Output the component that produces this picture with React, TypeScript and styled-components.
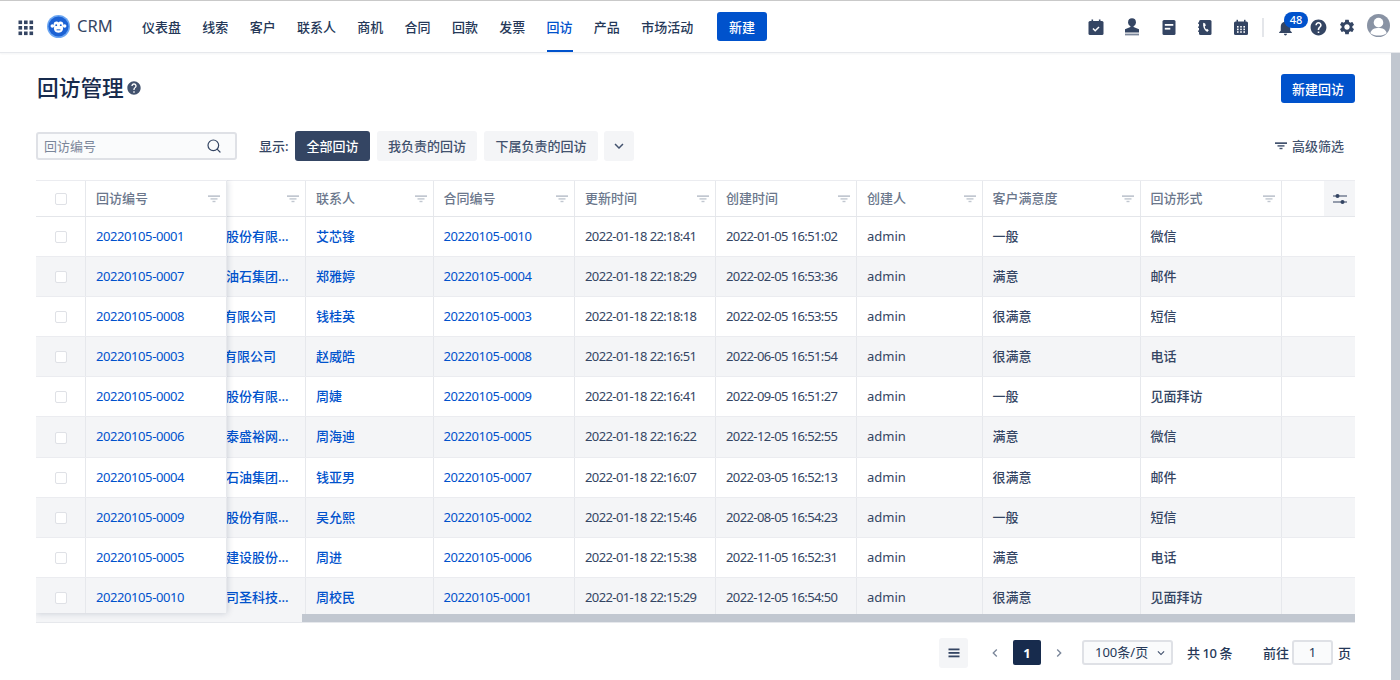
import React from "react";
import styled, { createGlobalStyle } from "styled-components";
import { MdNotifications, MdHelp, MdSettings, MdKeyboardArrowDown, MdKeyboardArrowLeft, MdKeyboardArrowRight } from "react-icons/md";
import { Search as SearchGlyph } from "lucide-react";

const Global = createGlobalStyle`
  html, body { margin: 0; padding: 0; width: 1400px; height: 680px; overflow: hidden; background: #fff; }
  body { font-family: "Noto Sans", "Noto Sans CJK SC", sans-serif; font-size: 13px; color: #172b4d; }
  * { box-sizing: border-box; }
`;

const Page = styled.div`position: relative; width: 1400px; height: 680px; overflow: hidden; background: #fff;`;
const TopStrip = styled.div`height: 1px; background: #c9c9c9;`;
const Nav = styled.header`
  position: relative; height: 52px; background: #fff; border-bottom: 1px solid #e6e8ec;
  box-shadow: 0 1px 2px rgba(9,30,66,.05);
`;
const GridIcon = styled.svg`position: absolute; left: 18px; top: 19px; width: 16px; height: 16px;`;
const Logo = styled.svg`position: absolute; left: 47px; top: 14px; width: 23px; height: 23px;`;
const Brand = styled.div`position: absolute; left: 77px; top: 14px; font-size: 16.5px; line-height: 22px; color: #344563;`;
const Menu = styled.nav`position: absolute; left: 142px; top: 0; height: 51px; display: flex; gap: 21.3px;`;
const MenuItem = styled.a<{ $active?: boolean }>`
  display: block; height: 51px; line-height: 53px; font-size: 13px; font-weight: 500;
  color: ${p => (p.$active ? "#0052cc" : "#253858")};
  border-bottom: 2px solid ${p => (p.$active ? "#0052cc" : "transparent")};
`;
const PrimaryButton = styled.button<{ $left: number; $top: number; $width: number }>`
  position: absolute; left: ${p => p.$left}px; top: ${p => p.$top}px; width: ${p => p.$width}px; height: 29px;
  padding: 0; border: 0; border-radius: 3px; background: #0052cc; color: #fff;
  font: 500 13px "Noto Sans", "Noto Sans CJK SC", sans-serif;
`;
const NavIcon = styled.span<{ $x: number }>`
  position: absolute; left: ${p => p.$x - 10}px; top: 16px; width: 20px; height: 20px; color: #344563;
  display: flex; align-items: center; justify-content: center;
`;
const Divider = styled.div`position: absolute; left: 1262px; top: 17px; width: 2px; height: 19px; background: #e4e6ea;`;
const Badge = styled.div`
  position: absolute; left: 1284px; top: 11px; width: 24px; height: 16px; border-radius: 8px; background: #0052cc; color: #fff;
  font-size: 11px; font-weight: 500; line-height: 16px; text-align: center;
`;
const Avatar = styled.svg`position: absolute; left: 1367px; top: 13px; width: 23px; height: 23px;`;

const PageScroll = styled.div`position: absolute; left: 1391px; top: 53px; width: 9px; height: 627px; background: #c1c7d0;`;
const Title = styled.h1`position: absolute; left: 37px; top: 72px; margin: 0; font-size: 21.7px; line-height: 32px; font-weight: 500; color: #172b4d;`;
const TitleHelp = styled.span`position: absolute; left: 126px; top: 80px; color: #42526e; display: flex;`;

const Search = styled.div`
  position: absolute; left: 36px; top: 132px; width: 201px; height: 28px; background: #fafbfc;
  border: 2px solid #dfe1e6; border-radius: 3px; padding-left: 6px; line-height: 24px; color: #7a869a; font-size: 13px;
`;
const SearchIcon = styled.span`position: absolute; right: 13px; top: 4px; color: #344563; display: flex;`;
const ShowLabel = styled.div`position: absolute; left: 259px; top: 136px; line-height: 20px; color: #344563; font-size: 13px; font-weight: 500;`;
const Tab = styled.div<{ $left: number; $width: number; $active?: boolean }>`
  position: absolute; left: ${p => p.$left}px; top: 131px; width: ${p => p.$width}px; height: 30px; border-radius: 3px; padding-bottom: 1px;
  background: ${p => (p.$active ? "#344563" : "#f4f5f7")}; color: ${p => (p.$active ? "#fff" : "#42526e")};
  font-size: 13px; font-weight: 500; display: flex; align-items: center; justify-content: center;
`;
const AdvFilter = styled.div`position: absolute; left: 1292px; top: 136px; line-height: 20px; font-size: 13px; font-weight: 500; color: #42526e;`;
const AdvIcon = styled.svg`position: absolute; left: 1275px; top: 142px; width: 12px; height: 8px;`;

const Table = styled.div`
  position: absolute; left: 36px; top: 180px; width: 1319px; height: 443px; overflow: hidden;
  background: #f4f5f7; border-bottom: 1px solid #e6e8ec;
`;
const Rows = styled.div`position: absolute; left: 0; top: 0; width: 1319px; height: 434px; overflow: hidden; background: #fff;`;
const HeaderRow = styled.div`
  display: flex; height: 37px; background: #fff; border-top: 1px solid #ebecf0; border-bottom: 1px solid #e4e6ea;
`;
const Row = styled.div<{ $alt: boolean }>`
  display: flex; height: 40.1px; background: ${p => (p.$alt ? "#f4f5f7" : "#fff")}; border-bottom: 1px solid #ebecf0;
`;
const Cell = styled.div<{ $w: number; $link?: boolean }>`
  flex: none; width: ${p => p.$w}px; padding: 0 10px; border-right: 1px solid #e6e8ec;
  white-space: nowrap; overflow: hidden;
  line-height: 39px; font-size: 13px; font-weight: 500; color: ${p => (p.$link ? "#0052cc" : "#344563")};
`;
const IdCell = styled(Cell)`font-weight: 400; letter-spacing: -0.42px;`;
const TimeCell = styled(Cell)`font-weight: 400; letter-spacing: -0.6px;`;
const AdminCell = styled(Cell)`font-weight: 400;`;
const NameCell = styled(Cell)<{ $shift: number }>`
  padding: 0; text-indent: ${p => -p.$shift}px;
`;
const HeadCell = styled.div<{ $w: number }>`
  position: relative; flex: none; width: ${p => p.$w}px; padding-left: 10px; border-right: 1px solid #e6e8ec;
  line-height: 35px; font-size: 13px; color: #6b778c; font-weight: 500; white-space: nowrap; overflow: hidden;
`;
const HeadFilter = styled.svg`position: absolute; right: 6px; top: 14px; width: 12px; height: 8px;`;
const Spacer = styled.div`flex: 0 0 191px;`;
const Rest = styled.div`flex: 1;`;
const SettingCell = styled.div`
  position: absolute; right: 0; top: 1px; width: 31px; height: 35px; background: #f4f5f7;
  display: flex; align-items: center; justify-content: center;
`;
const Fixed = styled.div`
  position: absolute; left: 0; top: 0; width: 191px; height: 433px; overflow: hidden; background: #fff;
  box-shadow: 0 0 7px rgba(9,30,66,.2);
`;
const CheckCell = styled.div`
  flex: none; width: 50px; border-right: 1px solid #e6e8ec;
  display: flex; align-items: center; justify-content: center; padding-top: 1px;
`;
const Check = styled.span`display: block; width: 12px; height: 12px; background: #fff; border: 1px solid #dfe1e6; border-radius: 2px;`;
const Thumb = styled.div`position: absolute; left: 266px; top: 434px; width: 1053px; height: 8px; background: #c1c7d0;`;

const Pager = styled.div`position: absolute; left: 0; top: 0;`;
const ListBtn = styled.div`
  position: absolute; left: 939px; top: 638px; width: 29px; height: 30px; border-radius: 3px; background: #f4f5f7;
  display: flex; align-items: center; justify-content: center;
`;
const Arrow = styled.span<{ $x: number }>`position: absolute; left: ${p => p.$x - 8}px; top: 645px; display: flex; color: #7a869a;`;
const PageNo = styled.div`
  position: absolute; left: 1013px; top: 640px; width: 28px; height: 25px; border-radius: 2px; background: #172b4d; color: #fff;
  font-weight: 700; line-height: 26px; text-align: center; font-size: 13px;
`;
const SizeSelect = styled.div`
  position: absolute; left: 1082px; top: 640px; width: 91px; height: 25px; background: #fafbfc; border: 2px solid #dfe1e6; border-radius: 3px;
  padding-left: 11px; line-height: 21px; color: #253858; font-size: 13px;
`;
const SelectArrow = styled.span`position: absolute; right: 3px; top: 4px; display: flex; color: #42526e;`;
const PagerText = styled.div<{ $x: number }>`position: absolute; left: ${p => p.$x}px; top: 643px; line-height: 20px; font-size: 13px; color: #253858; font-weight: 500; white-space: nowrap; letter-spacing: -0.1px;`;
const PagerTotal = styled(PagerText)`letter-spacing: -0.45px;`;
const JumpBox = styled.div`
  position: absolute; left: 1292px; top: 640px; width: 41px; height: 25px; background: #fafbfc; border: 2px solid #dfe1e6; border-radius: 3px;
  text-align: center; line-height: 21px; font-size: 13px; color: #253858;
`;

const data: [string, string, number, string, string, string, string, string, string][] = [
  ["0001", "股份有限…", 1, "艾芯锋", "0010", "22:18:41", "2022-01-05 16:51:02", "一般", "微信"],
  ["0007", "油石集团…", 1, "郑雅婷", "0004", "22:18:29", "2022-02-05 16:53:36", "满意", "邮件"],
  ["0008", "有限公司", 3, "钱桂英", "0003", "22:18:18", "2022-02-05 16:53:55", "很满意", "短信"],
  ["0003", "有限公司", 3, "赵威皓", "0008", "22:16:51", "2022-06-05 16:51:54", "很满意", "电话"],
  ["0002", "股份有限…", 1, "周婕", "0009", "22:16:41", "2022-09-05 16:51:27", "一般", "见面拜访"],
  ["0006", "泰盛裕网…", 1, "周海迪", "0005", "22:16:22", "2022-12-05 16:52:55", "满意", "微信"],
  ["0004", "石油集团…", 1, "钱亚男", "0007", "22:16:07", "2022-03-05 16:52:13", "很满意", "邮件"],
  ["0009", "股份有限…", 1, "吴允熙", "0002", "22:15:46", "2022-08-05 16:54:23", "一般", "短信"],
  ["0005", "建设股份…", 1, "周进", "0006", "22:15:38", "2022-11-05 16:52:31", "满意", "电话"],
  ["0010", "司圣科技…", 1, "周校民", "0001", "22:15:29", "2022-12-05 16:54:50", "很满意", "见面拜访"],
];

const widths = { name: 79, contact: 127.5, contract: 141.5, update: 141, create: 141, creator: 125.5, sat: 158, form: 141 };
const menu = ["仪表盘", "线索", "客户", "联系人", "商机", "合同", "回款", "发票", "回访", "产品", "市场活动"];

const FilterGlyph = ({ color = "#c1c7d0" }: { color?: string }) => (
  <>
    <rect x="0" y="0.3" width="12" height="1.7" fill={color} />
    <rect x="2.5" y="3.2" width="7" height="1.4" fill={color} />
    <rect x="4.5" y="5.8" width="3" height="1.4" fill={color} />
  </>
);

const CalendarCheck = () => (
  <svg width="16" height="17" viewBox="0 0 16 17">
    <rect x="0.500" y="2" width="15" height="14" rx="1.500" fill="#344563" />
    <rect x="3.500" y="0.500" width="1.600" height="3" fill="#344563" />
    <rect x="10.900" y="0.500" width="1.600" height="3" fill="#344563" />
    <path d="M5 9.500l2.200 2.200L11 8" fill="none" stroke="#fff" strokeWidth="1.500" />
  </svg>
);
const Stamp = () => (
  <svg width="16" height="18" viewBox="0 0 16 18">
    <circle cx="8" cy="4.200" r="3.900" fill="#344563" />
    <path d="M6.400 6h3.200v3L15 11.200V14.500H1V11.200L6.400 9z" fill="#344563" />
    <rect x="1" y="15.600" width="14" height="1.800" fill="#7a869a" />
  </svg>
);
const Note = () => (
  <svg width="16" height="17" viewBox="0 0 16 17">
    <rect x="1.500" y="1" width="13" height="15" rx="1.500" fill="#344563" />
    <rect x="3.800" y="5" width="8.500" height="1.800" fill="#fff" />
    <rect x="3.800" y="8.800" width="5.500" height="1.800" fill="#fff" />
  </svg>
);
const PhoneBook = () => (
  <svg width="16" height="17" viewBox="0 0 16 17">
    <rect x="2" y="1" width="12.500" height="15" rx="1.500" fill="#344563" />
    <rect x="1" y="3.500" width="2" height="1.300" fill="#344563" />
    <rect x="1" y="7.500" width="2" height="1.300" fill="#344563" />
    <rect x="1" y="11.500" width="2" height="1.300" fill="#344563" />
    <path d="M6.200 3.800c-.6 4 .8 7 4 9.200l1.600-1.800-1.800-1.400-.9.7c-.8-.9-1.200-2-1.300-3.200l1-.5-.6-2.400z" fill="#fff" />
  </svg>
);
const CalendarGrid = () => (
  <svg width="16" height="17" viewBox="0 0 16 17">
    <rect x="1" y="2.500" width="14" height="13.500" rx="1.500" fill="#344563" />
    <rect x="3.500" y="0.800" width="1.500" height="3" fill="#344563" />
    <rect x="11" y="0.800" width="1.500" height="3" fill="#344563" />
    {[4, 7.2, 10.4].flatMap(x => [7, 9.6, 12.2].map(y => <rect key={`${x}-${y}`} x={x} y={y} width="1.600" height="1.600" fill="#fff" />))}
  </svg>
);

const columnHeads: [string, number][] = [
  ["", widths.name],
  ["联系人", widths.contact],
  ["合同编号", widths.contract],
  ["更新时间", widths.update],
  ["创建时间", widths.create],
  ["创建人", widths.creator],
  ["客户满意度", widths.sat],
  ["回访形式", widths.form],
];

const HeadFilterIcon = () => <HeadFilter viewBox="0 0 12 8"><FilterGlyph /></HeadFilter>;

export default function App() {
  return (
    <Page>
      <Global />
      <TopStrip />
      <Nav>
        <GridIcon viewBox="0 0 16 16">
          {[0.5, 6, 11.5].flatMap(x => [0.5, 6, 11.5].map(y => <rect key={`${x}${y}`} x={x} y={y} width="3.600" height="3.600" fill="#344563" />))}
        </GridIcon>
        <Logo viewBox="0 0 24 24">
          <circle cx="12" cy="12" r="12" fill="#6ba6f2" />
          <circle cx="12" cy="12" r="10.500" fill="#1c62d4" />
          <circle cx="5.600" cy="11.500" r="1.900" fill="#fff" />
          <circle cx="18.400" cy="11.500" r="1.900" fill="#fff" />
          <path d="M12 7.800c1-1.500 4.600-1.500 5 1.300.2 1.500-.5 2.500-.5 3.400 1 3-1 6-4.500 6s-5.500-3-4.500-6c0-.9-.7-1.900-.5-3.400.4-2.800 4-2.800 5-1.300z" fill="#fff" />
          <circle cx="9.600" cy="10.600" r="1" fill="#1c62d4" />
          <circle cx="14.400" cy="10.600" r="1" fill="#1c62d4" />
          <path d="M10 15.500h4" stroke="#1c62d4" strokeWidth="1" />
        </Logo>
        <Brand>CRM</Brand>
        <Menu>
          {menu.map(m => <MenuItem key={m} $active={m === "回访"}>{m}</MenuItem>)}
        </Menu>
        <PrimaryButton $left={717} $top={11} $width={50}>新建</PrimaryButton>
        <NavIcon $x={1096}><CalendarCheck /></NavIcon>
        <NavIcon $x={1132}><Stamp /></NavIcon>
        <NavIcon $x={1169}><Note /></NavIcon>
        <NavIcon $x={1205}><PhoneBook /></NavIcon>
        <NavIcon $x={1241}><CalendarGrid /></NavIcon>
        <Divider />
        <NavIcon $x={1285}><MdNotifications size={19} /></NavIcon>
        <Badge>48</Badge>
        <NavIcon $x={1318}><MdHelp size={19} /></NavIcon>
        <NavIcon $x={1347}><MdSettings size={18} /></NavIcon>
        <Avatar viewBox="0 0 24 24">
          <circle cx="12" cy="12" r="12" fill="#8993a4" />
          <circle cx="12" cy="9" r="5" fill="#fff" />
          <path d="M3.500 20c1-4.500 4.500-5.500 8.500-5.500s7.500 1 8.500 5.500c-2.200 1.800-5 2.400-8.500 2.400S5.700 21.800 3.500 20z" fill="#fff" />
        </Avatar>
      </Nav>
      <PageScroll />

      <Title>回访管理</Title>
      <TitleHelp><MdHelp size={16} /></TitleHelp>
      <PrimaryButton $left={1281} $top={74} $width={74}>新建回访</PrimaryButton>

      <Search>回访编号<SearchIcon><SearchGlyph size={16} strokeWidth={1.8} /></SearchIcon></Search>
      <ShowLabel>显示:</ShowLabel>
      <Tab $left={295} $width={75} $active>全部回访</Tab>
      <Tab $left={377} $width={100}>我负责的回访</Tab>
      <Tab $left={484} $width={114}>下属负责的回访</Tab>
      <Tab $left={604} $width={30}><MdKeyboardArrowDown size={18} /></Tab>
      <AdvIcon viewBox="0 0 12 8"><FilterGlyph color="#42526e" /></AdvIcon>
      <AdvFilter>高级筛选</AdvFilter>

      <Table>
        <Rows>
          <HeaderRow>
            <Spacer />
            {columnHeads.map(([label, w]) => (
              <HeadCell key={label || "name"} $w={w}>{label}<HeadFilterIcon /></HeadCell>
            ))}
            <Rest />
          </HeaderRow>
          {data.map((d, i) => (
            <Row key={d[0]} $alt={i % 2 === 1}>
              <Spacer />
              <NameCell $w={widths.name} $link $shift={d[2]}>{d[1]}</NameCell>
              <Cell $w={widths.contact} $link>{d[3]}</Cell>
              <IdCell $w={widths.contract} $link>20220105-{d[4]}</IdCell>
              <TimeCell $w={widths.update}>2022-01-18 {d[5]}</TimeCell>
              <TimeCell $w={widths.create}>{d[6]}</TimeCell>
              <AdminCell $w={widths.creator}>admin</AdminCell>
              <Cell $w={widths.sat}>{d[7]}</Cell>
              <Cell $w={widths.form}>{d[8]}</Cell>
              <Rest />
            </Row>
          ))}
          <SettingCell>
            <svg width="14" height="12" viewBox="0 0 14 12">
              <path d="M0 3h14M0 9h14" stroke="#344563" strokeWidth="1.200" />
              <circle cx="4.500" cy="3" r="2" fill="#344563" />
              <circle cx="9.500" cy="9" r="2" fill="#344563" />
            </svg>
          </SettingCell>
        </Rows>
        <Fixed>
          <HeaderRow>
            <CheckCell><Check /></CheckCell>
            <HeadCell $w={141}>回访编号<HeadFilterIcon /></HeadCell>
          </HeaderRow>
          {data.map((d, i) => (
            <Row key={d[0]} $alt={i % 2 === 1}>
              <CheckCell><Check /></CheckCell>
              <IdCell $w={141} $link>20220105-{d[0]}</IdCell>
            </Row>
          ))}
        </Fixed>
        <Thumb />
      </Table>

      <Pager>
        <ListBtn>
          <svg width="12" height="10" viewBox="0 0 12 10">
            <rect x="0.500" y="0.500" width="11" height="1.800" fill="#344563" />
            <rect x="0.500" y="4" width="11" height="1.800" fill="#344563" />
            <rect x="0.500" y="7.500" width="11" height="1.800" fill="#344563" />
          </svg>
        </ListBtn>
        <Arrow $x={995}><MdKeyboardArrowLeft size={16} /></Arrow>
        <PageNo>1</PageNo>
        <Arrow $x={1059}><MdKeyboardArrowRight size={16} /></Arrow>
        <SizeSelect>100条/页<SelectArrow><MdKeyboardArrowDown size={14} /></SelectArrow></SizeSelect>
        <PagerTotal $x={1187}>共 10 条</PagerTotal>
        <PagerText $x={1263}>前往</PagerText>
        <JumpBox>1</JumpBox>
        <PagerText $x={1338}>页</PagerText>
      </Pager>
    </Page>
  );
}
